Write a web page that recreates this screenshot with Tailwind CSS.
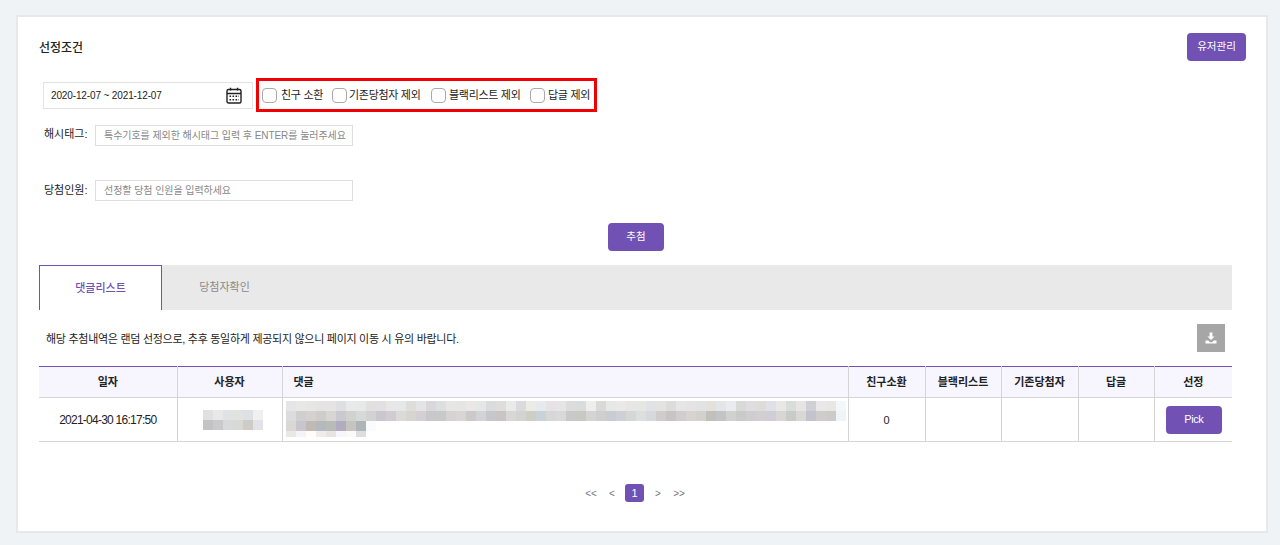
<!DOCTYPE html>
<html lang="ko">
<head>
  <meta charset="UTF-8">
  <title>선정조건</title>
  <meta name="viewport" content="width=device-width, initial-scale=1.0">
  <script src="https://cdn.jsdelivr.net/npm/@tailwindcss/browser@4"></script>
</head>
<body class="bg-[#eff3f6] font-['Liberation_Sans','Noto_Sans_CJK_KR',sans-serif] text-[11px] text-[#222]">
  <div class="h-[545px] overflow-hidden pt-[15px] pl-[16px] pr-[12px]">
    <section class="h-[518px] bg-white border-2 border-[#e6e8ea] pt-[16px] pl-[21px] pr-[20px]">

      <div class="flex justify-between items-center h-[28px]">
        <h2 class="text-[12px] font-medium pt-[2px]">선정조건</h2>
        <button class="w-[59px] h-[28px] rounded bg-[#7152b4] text-white text-[10.5px]">유저관리</button>
      </div>

      <div class="flex items-center mt-[17px] ml-[4px] h-[34px]">
        <div class="w-[210px] h-[27px] border border-[#e3e3e3] flex items-center justify-between pl-[7px] pr-[10px] text-[10px] tracking-[-0.13px]">
          <span>2020-12-07 ~ 2021-12-07</span>
          <svg width="16" height="17" viewBox="0 0 16 17" fill="none" stroke="#222" stroke-width="1.4">
            <rect x="1" y="2.5" width="14" height="13.5" rx="1.5"/>
            <path d="M1 6.5h14M4.5 0.8v2.6M11.5 0.8v2.6"/>
            <path stroke-width="1.5" stroke-dasharray="1.6 1.4" d="M3.5 9.2h9.5M3.5 12.8h9.5"/>
          </svg>
        </div>
        <div class="ml-[3px] w-[341px] h-[34px] border-[3px] border-[#f00000] flex items-center pl-[3px] pt-[1px] text-[11px] tracking-[-0.3px] whitespace-nowrap">
          <label class="flex items-center gap-[4px] w-[70px]"><span class="w-[15px] h-[15px] rounded-[4px] border border-[#aaa]"></span>친구 소환</label>
          <label class="flex items-center gap-[2px] w-[99px]"><span class="w-[15px] h-[15px] rounded-[4px] border border-[#aaa]"></span>기존당첨자 제외</label>
          <label class="flex items-center gap-[3px] w-[99px]"><span class="w-[15px] h-[15px] rounded-[4px] border border-[#aaa]"></span>블랙리스트 제외</label>
          <label class="flex items-center gap-[3px]"><span class="w-[15px] h-[15px] rounded-[4px] border border-[#aaa]"></span>답글 제외</label>
        </div>
      </div>

      <div class="flex items-center mt-[13px] ml-[5px] h-[21px]">
        <span class="w-[51px] pb-[2px]">해시태그:</span>
        <div class="w-[258px] h-[21px] border border-[#dedede] flex items-center pl-[8px] text-[10px] tracking-[-0.06px] text-[#888]">특수기호를 제외한 해시태그 입력 후 ENTER를 눌러주세요</div>
      </div>

      <div class="flex items-center mt-[34px] ml-[5px] h-[21px]">
        <span class="w-[51px]">당첨인원:</span>
        <div class="w-[258px] h-[21px] border border-[#dedede] flex items-center pl-[8px] text-[10px] tracking-[-0.06px] text-[#888]">선정할 당첨 인원을 입력하세요</div>
      </div>

      <div class="flex justify-center mt-[22px] pr-[13px]">
        <button class="w-[56px] h-[28px] rounded bg-[#7152b4] text-white text-[10.5px]">추첨</button>
      </div>

      <div class="mt-[14px] mr-[14px] h-[45px] bg-[#e9e9e9] flex">
        <div class="w-[123px] h-[45px] bg-white border-t border-x border-[#7152b4] flex items-center justify-center font-medium text-[#7152b4] pt-[1px]">댓글리스트</div>
        <div class="w-[125px] h-[45px] flex items-center justify-center text-[#8a8a8a]">당첨자확인</div>
      </div>

      <div class="flex items-center justify-between mt-[14px] mr-[21px] pl-[7px] h-[28px]">
        <p class="text-[11px] tracking-[-0.28px] pt-[2px]">해당 추첨내역은 랜덤 선정으로, 추후 동일하게 제공되지 않으니 페이지 이동 시 유의 바랍니다.</p>
        <button class="w-[28px] h-[28px] bg-[#a6a6a6] flex items-center justify-center">
          <svg width="12" height="12" viewBox="0 0 12 12" fill="#fff">
            <path d="M4.6 0.5h2.8v4h2.2L6 8 2.4 4.5h2.2z"/>
            <path d="M0.5 8.6h2.8L4.9 10.2h2.2l1.6-1.6h2.8v2.9H0.5z"/>
          </svg>
        </button>
      </div>

      <table class="mt-[14px] w-[1193px] table-fixed border-collapse border-t border-[#7152b4] text-[11px]">
        <colgroup>
          <col class="w-[138px]"><col class="w-[105px]"><col class="w-[566px]"><col class="w-[77px]"><col class="w-[76px]"><col class="w-[77px]"><col class="w-[76px]"><col class="w-[78px]">
        </colgroup>
        <thead>
          <tr class="h-[31px] bg-[#f7f5fd] border-b border-[#d5d5d5]">
            <th class="font-bold">일자</th>
            <th class="font-bold border-l border-[#d5d5d5]">사용자</th>
            <th class="font-bold border-l border-[#d5d5d5] text-left pl-[11px]">댓글</th>
            <th class="font-bold border-l border-[#d5d5d5]">친구소환</th>
            <th class="font-bold border-l border-[#d5d5d5]">블랙리스트</th>
            <th class="font-bold border-l border-[#d5d5d5]">기존당첨자</th>
            <th class="font-bold border-l border-[#d5d5d5]">답글</th>
            <th class="font-bold border-l border-[#d5d5d5]">선정</th>
          </tr>
        </thead>
        <tbody>
          <tr class="h-[44px] border-b border-[#d5d5d5]">
            <td class="text-center text-[12px] tracking-[-0.75px] pt-[1px]">2021-04-30 16:17:50</td>
            <td class="border-l border-[#d5d5d5] pl-[6px]"><svg id="blur-user" class="block mx-auto" width="60" height="20"></svg></td>
            <td class="border-l border-[#d5d5d5] pl-[3px]"><svg id="blur-comment" class="block" width="560" height="38"></svg></td>
            <td class="border-l border-[#d5d5d5] text-center pt-[2px]">0</td>
            <td class="border-l border-[#d5d5d5]"></td>
            <td class="border-l border-[#d5d5d5]"></td>
            <td class="border-l border-[#d5d5d5]"></td>
            <td class="border-l border-[#d5d5d5] text-center pl-[1px]">
              <button class="w-[56px] h-[28px] rounded bg-[#7152b4] text-white text-[11px] tracking-[-0.5px]">Pick</button>
            </td>
          </tr>
        </tbody>
      </table>

      <nav class="flex items-center justify-center mt-[42px] pr-[15px] h-[18px] text-[10px] text-[#777]">
        <a class="w-[20px] text-center">&lt;&lt;</a>
        <a class="ml-[4px] w-[14px] text-center">&lt;</a>
        <a class="ml-[6px] w-[19px] h-[18px] rounded-[3px] bg-[#7152b4] text-white text-[11px] flex items-center justify-center">1</a>
        <a class="ml-[7px] w-[14px] text-center">&gt;</a>
        <a class="ml-[4px] w-[20px] text-center">&gt;&gt;</a>
      </nav>
    </section>
  </div>

  <script>
    // blurred-out user name and comment, one array per mosaic row
    const userRows = [
      ['e0e0e0','e8e8e8','dfe3e4','e2e2df','dfe0e3','f0f0ef'],
      ['c2c4c3','cacacc','d6dadb','d6d9d6','cfccc8','e2e3e8']
    ];
    const commentRows = [
      ['e4e6e5','e8e8e6','e6e6e6','e6e4e3','e5e3e3','dde0e3','e8e9e9','e7e9e8','e2dfdf','e3e0e4','e7e7e8','e6e8e7','dfdddb','e2e4e6','d9d7db','dcdee0','e6e6e5','e5e5e3','eae8e6','e4e7e6','d9dbde','dfdddc','e7ebea','dcdadc','ecebe6','e6e9ed','e6e3e6','e7e4e8','dcdcda','d8dcdb','eeefec','d9d9d7','e6e8e6','ebe8e8','e6e6e5','e5e7e3','e0e2e5','e3e3e1','dcdcda','e6e6e6','e5e3e4','e2e1e5','e3e1dc','e3e5e8','e9ebee','d9d9da','e0dde1','dddcd8','dfe0e8','e8e9e6','d9ddd9','e7e5e3','d0cfd6','e9e7e8','e8e7e5','f3f7f7'],
      ['dcdcde','cfcfd0','d3d2d0','cfcdcb','d8d6d3','c9c9cf','cfd2cd','d5d9d8','d3d1d1','cbc7cf','cfcdd3','dadbd9','d8d5d1','d3cfd5','c8c8cb','c9c9c9','d6d4d2','d6d6d5','cdc8ca','d2d3d8','c6c7ca','c9c5c7','d8d7d6','d3d3d2','cdcec5','c9d2d6','d8d7d7','d9d9d7','c9c9c9','c9c9c3','d4d4d3','cfcfcf','c9ccd0','cdd0d6','d6d6d6','dae0de','d6d8dc','cfcccd','c5c5c5','cfcdcf','d6d3d0','d2d1cc','c2c0bb','c2c4c8','d1d1d0','c9cbc9','cfcdcf','d1cfd0','cfcdd6','d9d7d3','c9cbc8','dbd8d3','c3c3cd','d1cccb','cbccc8','eff4f7'],
      ['d8d9d4','c8c6cc','c1b9b3','b3b9bc','b8bcb8','b2acc0','c6c4c0','aeb4b8','f8fcfd'],
      ['e9e8e4','f2f4f8','fefdf9','ededed','e6e5e1','f7f6fc','fbfaf6','dddde0']
    ];

    function drawMosaic(id, rows) {
      const svg = document.getElementById(id);
      svg.innerHTML = rows.map((row, y) => row.map((c, x) =>
        `<rect x="${x * 10}" y="${y * 10}" width="10" height="${y === 3 ? 6 : 10}" fill="#${c}"/>`
      ).join('')).join('');
    }
    drawMosaic('blur-user', userRows);
    drawMosaic('blur-comment', commentRows);
  </script>
</body>
</html>
